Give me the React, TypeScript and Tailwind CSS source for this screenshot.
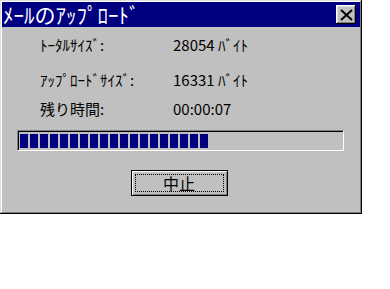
const rows = [
  { label: 'ﾄｰﾀﾙｻｲｽﾞ:', value: '28054 ﾊﾞｲﾄ' },
  { label: 'ｱｯﾌﾟﾛｰﾄﾞｻｲｽﾞ:', value: '16331 ﾊﾞｲﾄ' },
  { label: '残り時間:', value: '00:00:07' },
];

const font = "font-['MS_UI_Gothic','Noto_Sans_CJK_JP',sans-serif]";

export default function App() {
  const blocks = Array.from({ length: 19 });

  return (
    <div className="w-[390px] h-[289px] bg-white">
      <div className="w-[362px] h-[214px] bg-[#c0c0c0] p-[2px] flex flex-col shadow-[inset_-1px_-1px_0_#000,inset_1px_1px_0_#dfdfdf,inset_-2px_-2px_0_#808080,inset_2px_2px_0_#fff]">
        {/* Title bar */}
        <div className="h-[25px] bg-[#000080] flex items-center justify-between pl-[1px] pr-[4px]">
          <span className={`${font} text-white text-[21px] leading-none`}>ﾒｰﾙのｱｯﾌﾟﾛｰﾄﾞ</span>
          <button className="w-[20px] h-[19px] bg-[#c0c0c0] flex items-center justify-center shadow-[inset_-1px_-1px_0_#000,inset_1px_1px_0_#fff,inset_-2px_-2px_0_#808080,inset_2px_2px_0_#dfdfdf]">
            <svg width="13" height="12" viewBox="0 0 13 12">
              <path d="M1 1 L12 11 M12 1 L1 11" stroke="#000" strokeWidth="2" />
            </svg>
          </button>
        </div>

        {/* Info rows */}
        <div className={`${font} text-[15px] text-black`}>
          {rows.map((r, i) => (
            <div
              key={r.label}
              className={`flex items-center h-[20px] ${i === 0 ? 'mt-[8px]' : i === 1 ? 'mt-[15px]' : 'mt-[9px]'}`}
            >
              <span className="w-[171px] pl-[38px]">{r.label}</span>
              <span>{r.value}</span>
            </div>
          ))}
        </div>

        {/* Progress */}
        <div className="mt-[11px] ml-[15px] w-[327px] h-[21px] border-t border-l border-[#808080] border-b border-r border-b-white border-r-white">
          <div className="h-full flex items-center gap-[2px] pl-[2px] shadow-[inset_1px_1px_0_#000]">
            {blocks.map((_, i) => (
              <div key={i} className="w-[8px] h-[14px] bg-[#000080]" />
            ))}
          </div>
        </div>

        {/* Button */}
        <div className="flex justify-center mt-[19px] pr-[4px]">
          <button className="w-[97px] h-[26px] bg-[#c0c0c0] border border-black p-[1px] shadow-[inset_1px_1px_0_#fff,inset_-1px_-1px_0_#808080] flex">
            <div className="flex-1 m-[2px] border border-dotted border-black flex items-center justify-center">
              <span className={`${font} text-[16px] leading-none text-black`}>中止</span>
            </div>
          </button>
        </div>
      </div>
    </div>
  );
}
